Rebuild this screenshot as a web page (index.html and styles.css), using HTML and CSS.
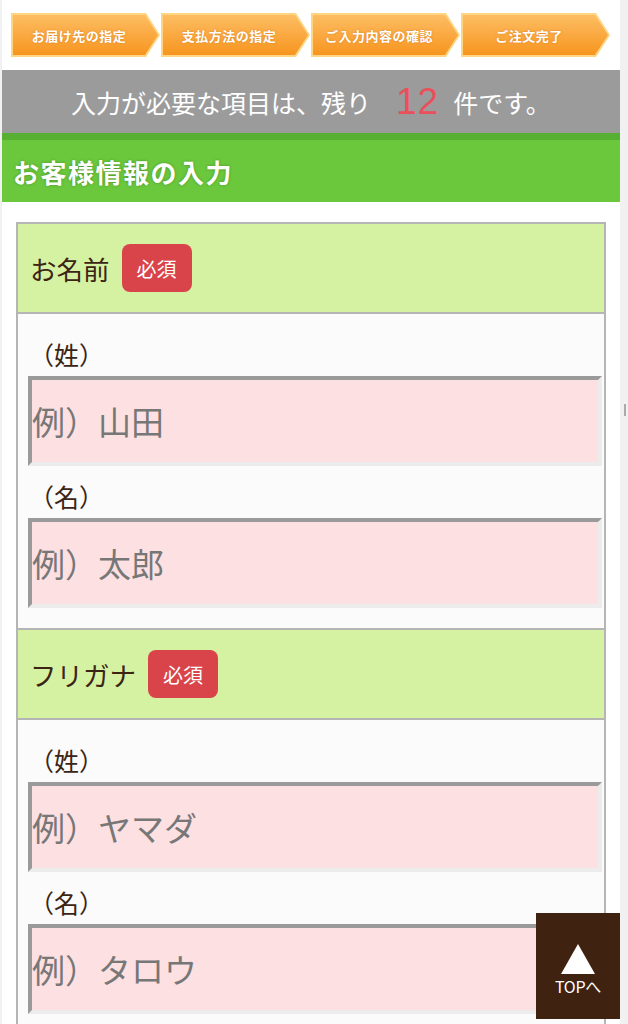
FILE: index.html
```html
<!DOCTYPE html>
<html lang="ja">
<head>
<meta charset="utf-8">
<title>お客様情報の入力</title>
<link rel="stylesheet" href="styles.css">
</head>
<body>
<div class="page">
  <nav class="steps">
    <div class="step"><div class="step-inner">お届け先の指定</div></div>
    <div class="step"><div class="step-inner">支払方法の指定</div></div>
    <div class="step"><div class="step-inner">ご入力内容の確認</div></div>
    <div class="step"><div class="step-inner">ご注文完了</div></div>
  </nav>
  <div class="remain">入力が必要な項目は、残り<span class="remain-num">12</span>件です。</div>
  <h1 class="heading">お客様情報の入力</h1>
  <div class="form-box">
    <div class="row-label"><span class="row-title">お名前</span><span class="badge">必須</span></div>
    <div class="row-fields">
      <div class="field-label">（姓）</div>
      <input class="field-input" type="text" placeholder="例）山田">
      <div class="field-label">（名）</div>
      <input class="field-input" type="text" placeholder="例）太郎">
    </div>
    <div class="row-label"><span class="row-title">フリガナ</span><span class="badge">必須</span></div>
    <div class="row-fields">
      <div class="field-label">（姓）</div>
      <input class="field-input" type="text" placeholder="例）ヤマダ">
      <div class="field-label">（名）</div>
      <input class="field-input" type="text" placeholder="例）タロウ">
    </div>
  </div>
</div>
<div class="scroll-thumb"></div>
<a class="to-top" href="#">
  <span class="to-top-arrow"></span>
  <span class="to-top-text">TOPへ</span>
</a>
</body>
</html>
```

FILE: styles.css
```css
* { box-sizing: border-box; }
html, body { margin: 0; padding: 0; }
body {
  background: #f1f1f1;
  font-family: "Noto Sans CJK JP", "Noto Sans", sans-serif;
  color: #3c2415;
}
.page {
  margin-left: 2px;
  width: 618px;
  background: #ffffff;
  min-height: 1017px;
}
.steps {
  display: flex;
  padding: 13px 0 13px 9px;
}
.step {
  width: 150px;
  height: 44px;
  padding: 2px;
  background: #fed582;
  clip-path: polygon(0 0, 135px 0, 149px 50%, 135px 100%, 0 100%);
}
.step-inner {
  height: 100%;
  padding-right: 14px;
  background: linear-gradient(#fdbd63, #f7951f);
  clip-path: polygon(0 0, 132px 0, 145px 50%, 132px 100%, 0 100%);
  display: flex;
  align-items: center;
  justify-content: center;
  color: #fff;
  font-size: 13px;
  font-weight: 700;
  letter-spacing: 0.5px;
  text-shadow: 0 0 2px #d9791a;
}
.remain {
  height: 63px;
  background: #9b9b9b;
  color: #fff;
  font-size: 25px;
  display: flex;
  align-items: center;
  padding-left: 69px;
}
.remain-num {
  color: #e8505b;
  font-family: "Liberation Sans", Arial, sans-serif;
  font-size: 37px;
  margin: 0 14px 0 25px;
  letter-spacing: 1px;
}
.heading {
  margin: 0;
  height: 69px;
  border-top: 7px solid #58b032;
  background: #6bc83d;
  color: #fff;
  font-size: 26px;
  font-weight: 700;
  letter-spacing: 1.5px;
  padding-left: 11px;
  display: flex;
  align-items: center;
  text-shadow: 0 0 3px #4a8f29;
}
.form-box {
  margin: 20px 14px 0 14px;
  border: 2px solid #b5b5b5;
  border-bottom: none;
}
.row-label {
  height: 90px;
  background: #d5f2a2;
  border-bottom: 2px solid #b5b5b5;
  display: flex;
  align-items: center;
  padding-left: 12px;
}
.row-label + .row-fields + .row-label { height: 92px; border-top: 2px solid #b5b5b5; }
.row-title {
  font-size: 26.5px;
  color: #3c2415;
}
.badge {
  margin-left: 12px;
  width: 70px;
  height: 48px;
  border-radius: 8px;
  background: #d9444b;
  color: #fff;
  font-size: 20px;
  display: flex;
  align-items: center;
  justify-content: center;
}
.row-fields {
  background: #fbfbfb;
  padding: 20px 0 20px 10px;
  display: flex;
  flex-direction: column;
}
.field-label {
  height: 40px;
  margin-bottom: 2px;
  padding-left: 1px;
  font-size: 25px;
  line-height: 40px;
  color: #3c2415;
}
.field-input {
  display: block;
  width: 574px;
  height: 90px;
  margin: 0 0 10px 0;
  padding: 0;
  border-style: solid;
  border-width: 4px;
  border-color: #9a9a9a #ececec #ececec #9a9a9a;
  background: #fde0e1;
  font-family: "Noto Sans CJK JP", sans-serif;
  font-size: 33px;
  color: #333;
  outline: none;
}
.field-input:last-child { margin-bottom: 0; }
.field-input::placeholder { color: #777777; opacity: 1; }
.scroll-thumb {
  position: fixed;
  right: 2px;
  top: 404px;
  width: 2px;
  height: 12px;
  background: #aaaaaa;
}
.to-top {
  position: fixed;
  right: 8px;
  bottom: 5px;
  width: 84px;
  height: 106px;
  background: #402211;
  display: flex;
  flex-direction: column;
  align-items: center;
  padding-top: 31px;
  text-decoration: none;
}
.to-top-arrow {
  width: 0;
  height: 0;
  border-left: 17.5px solid transparent;
  border-right: 17.5px solid transparent;
  border-bottom: 30px solid #ffffff;
}
.to-top-text {
  margin-top: 2px;
  color: #fff;
  font-size: 16px;
  font-weight: 400;
  line-height: 20px;
  letter-spacing: -0.3px;
}
```
